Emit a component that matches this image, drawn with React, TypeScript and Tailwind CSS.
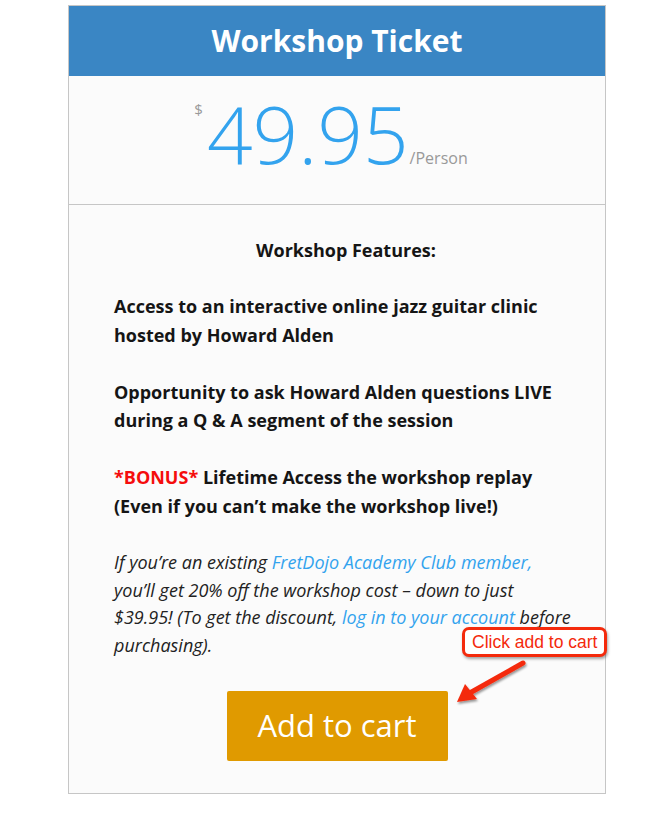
import React from "react";

export default function App() {
  const font = { fontFamily: '"Open Sans", "Liberation Sans", sans-serif' };
  return (
    <div className="min-h-[827px] bg-white pt-[5px]" style={font}>
      <div className="relative ml-[68px] w-[538px] border border-[#c6c6c6] bg-[#fbfbfb]">
        <div className="flex h-[70px] items-center justify-center bg-[#3a86c4]">
          <h1 className="text-[30px] font-bold leading-none text-white">Workshop Ticket</h1>
        </div>
        <div className="flex h-[129px] items-baseline justify-center border-b border-[#c6c6c6] pt-[17px] pr-[12px]">
          <span className="mt-[9px] mr-[4px] self-start text-[15px] leading-none text-[#999]">$</span>
          <span className="text-[80px] font-light leading-none text-[#33a3ee]">49.95</span>
          <span className="ml-[1px] text-[16px] leading-none text-[#999]">/Person</span>
        </div>
        <div className="pl-[45px] pr-[30px] pt-[31px] pb-[32px] text-[#151515]">
          <p className="pl-[3px] text-center text-[18px] font-bold leading-[28px]">Workshop Features:</p>
          <p className="mt-[28px] whitespace-nowrap text-[18px] font-bold leading-[28.5px]">
            Access to an interactive online jazz guitar clinic
            <br />
            hosted by Howard Alden
          </p>
          <p className="mt-[28.5px] whitespace-nowrap text-[18px] font-bold leading-[28.5px]">
            Opportunity to ask Howard Alden questions LIVE
            <br />
            during a Q &amp; A segment of the session
          </p>
          <p className="mt-[28.5px] whitespace-nowrap text-[18px] font-bold leading-[28.5px]">
            <span className="text-[#f50d0d]">*BONUS*</span> Lifetime Access the workshop replay
            <br />
            (Even if you can’t make the workshop live!)
          </p>
          <p className="mt-[29px] whitespace-nowrap text-[18px] italic leading-[27.7px] text-[#222]">
            If you’re an existing <span className="text-[#33a3ee]">FretDojo Academy Club member,</span>
            <br />
            you’ll get 20% off the workshop cost – down to just
            <br />
            $39.95! (To get the discount, <span className="text-[#33a3ee]">log in to your account</span> before
            <br />
            purchasing).
          </p>
          <div className="mt-[31px] flex justify-center">
            <button className="-ml-[15px] flex h-[70px] w-[221px] items-center justify-center rounded-[2px] bg-[#e09a00] text-[31px] leading-none text-white">
              Add to cart
            </button>
          </div>
        </div>

        <div className="absolute left-[393px] top-[621px] rounded-[7px] border-[3px] border-[#f42a0c] bg-white px-[7px] py-[2px] shadow-[1px_2px_3px_rgba(0,0,0,0.35)]">
          <span
            className="block whitespace-nowrap text-[17.5px] leading-[20px] text-[#f42a0c]"
            style={{ fontFamily: '"Liberation Sans", Arial, sans-serif' }}
          >
            Click add to cart
          </span>
        </div>
        <svg className="absolute left-[383px] top-[651px]" width="80" height="50" viewBox="0 0 80 50">
          <defs>
            <filter id="sh" x="-20%" y="-20%" width="150%" height="150%">
              <feDropShadow dx="1" dy="2" stdDeviation="1.2" floodColor="#000" floodOpacity="0.4" />
            </filter>
          </defs>
          <g filter="url(#sh)">
            <line x1="71" y1="6" x2="16" y2="37" stroke="#f42a0c" strokeWidth="5" strokeLinecap="round" />
            <polygon points="5,45 13,27 25,42" fill="#f42a0c" />
          </g>
        </svg>
      </div>
    </div>
  );
}
